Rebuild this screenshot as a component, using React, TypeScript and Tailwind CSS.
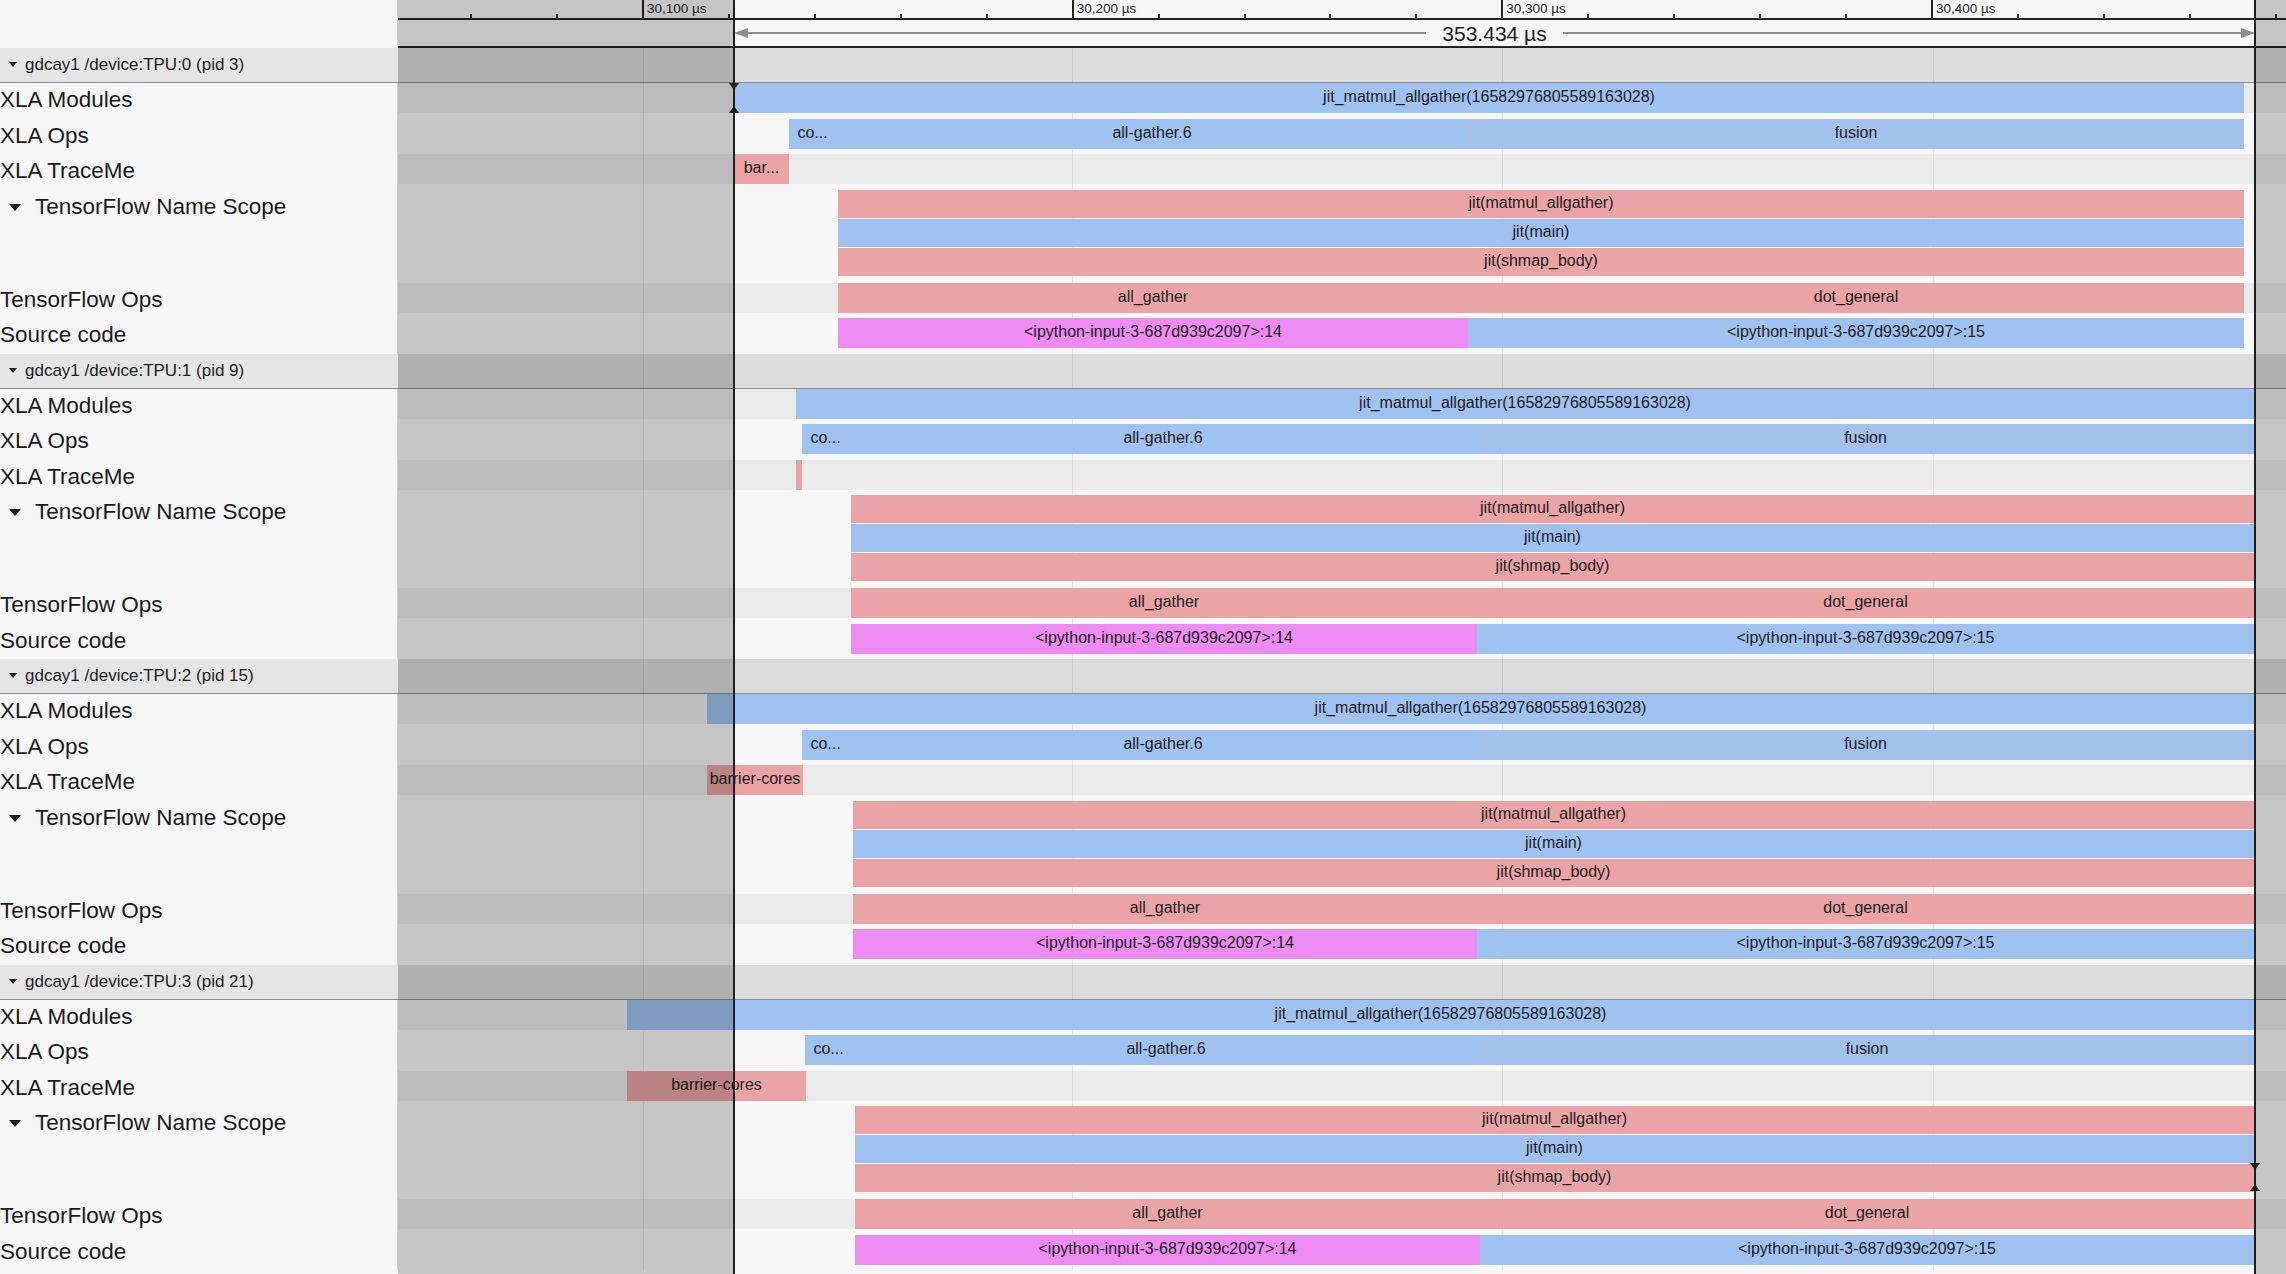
import React from "react";

// left edge of the timeline track, in page pixels
const X0 = 398;

type Bar = { s: number; e: number; label?: string; c: string };

type Section = {
  pid: string;
  mod: [number, number];
  co: number;
  ag: number;
  split: number;
  end: number;
  trace: { s: number; e: number; label: string };
  scope: number;
};

const BLUE = "bg-[#a0c2f0]";
const FUSION = "bg-[#a4c0ec]";
const PINK = "bg-[#eba4a6]";
const MAGENTA = "bg-[#ee8cf4]";

const sections: Section[] = [
  {
    pid: "gdcay1 /device:TPU:0 (pid 3)",
    mod: [734, 2244],
    co: 789,
    ag: 836,
    split: 1468,
    end: 2244,
    trace: { s: 734, e: 789, label: "bar..." },
    scope: 838,
  },
  {
    pid: "gdcay1 /device:TPU:1 (pid 9)",
    mod: [796, 2254],
    co: 802,
    ag: 849,
    split: 1477,
    end: 2254,
    trace: { s: 796, e: 802, label: "" },
    scope: 851,
  },
  {
    pid: "gdcay1 /device:TPU:2 (pid 15)",
    mod: [707, 2254],
    co: 802,
    ag: 849,
    split: 1477,
    end: 2254,
    trace: { s: 707, e: 803, label: "barrier-cores" },
    scope: 853,
  },
  {
    pid: "gdcay1 /device:TPU:3 (pid 21)",
    mod: [627, 2254],
    co: 805,
    ag: 852,
    split: 1480,
    end: 2254,
    trace: { s: 627, e: 806, label: "barrier-cores" },
    scope: 855,
  },
];

function BarEl({ b, top, h }: { b: Bar; top: number; h: number }) {
  return (
    <div
      className={`absolute z-[2] flex items-center justify-center overflow-hidden whitespace-nowrap pb-[2px] text-[16px] text-[#1c1c1c] ${b.c}`}
      style={{ left: b.s - X0, width: b.e - b.s, top, height: h }}
    >
      {b.label}
    </div>
  );
}

function Label({ children, scope }: { children: React.ReactNode; scope?: boolean }) {
  return (
    <div className="flex w-[398px] shrink-0 items-start border-r border-[#d2d2d2]">
      {scope ? (
        <div className="flex items-center">
          <svg width="12" height="8" viewBox="0 0 12 8" className="ml-[9px] mr-[14px] mt-[3px]">
            <polygon points="0,0 12,0 6,7" fill="#1c1c1c" />
          </svg>
          <span className="text-[22.5px] leading-[33px] text-[#1a1a1a]">{children}</span>
        </div>
      ) : (
        <span className="text-[22.5px] leading-[33px] text-[#1a1a1a]">{children}</span>
      )}
    </div>
  );
}

function Row({ label, bars, stripe }: { label: string; bars: Bar[]; stripe?: boolean }) {
  return (
    <div className="flex h-[35.5px]">
      <Label>{label}</Label>
      <div className="relative flex-1">
        {stripe && <div className="absolute inset-x-0 top-0 h-[30px] bg-[#ebebeb]" />}
        {bars.map((b, i) => (
          <BarEl key={i} b={b} top={0} h={30} />
        ))}
      </div>
    </div>
  );
}

function ScopeRow({ start, end }: { start: number; end: number }) {
  const levels: Bar[] = [
    { s: start, e: end, label: "jit(matmul_allgather)", c: PINK },
    { s: start, e: end, label: "jit(main)", c: BLUE },
    { s: start, e: end, label: "jit(shmap_body)", c: PINK },
  ];
  return (
    <div className="flex h-[93px]">
      <Label scope>TensorFlow Name Scope</Label>
      <div className="relative flex-1">
        {levels.map((b, i) => (
          <BarEl key={i} b={b} top={i * 29} h={28} />
        ))}
      </div>
    </div>
  );
}

function SectionBlock({ s }: { s: Section }) {
  return (
    <div>
      <div className="flex h-[35px] border-b border-[#8e8b97]">
        <div className="flex w-[398px] shrink-0 items-center bg-[#e5e5e5]">
          <svg width="8" height="6" viewBox="0 0 8 6" className="ml-[9px] mr-[8px]">
            <polygon points="0,0 8,0 4,5" fill="#1c1c1c" />
          </svg>
          <span className="text-[17px] text-[#1c1c1c]">{s.pid}</span>
        </div>
        <div className="flex-1 bg-[#dcdcdc]" />
      </div>
      <Row
        label="XLA Modules"
        stripe
        bars={[{ s: s.mod[0], e: s.mod[1], label: "jit_matmul_allgather(16582976805589163028)", c: BLUE }]}
      />
      <Row
        label="XLA Ops"
        bars={[
          { s: s.co, e: s.ag, label: "co...", c: BLUE },
          { s: s.ag, e: s.split, label: "all-gather.6", c: BLUE },
          { s: s.split, e: s.end, label: "fusion", c: FUSION },
        ]}
      />
      <Row label="XLA TraceMe" stripe bars={[{ s: s.trace.s, e: s.trace.e, label: s.trace.label, c: PINK }]} />
      <ScopeRow start={s.scope} end={s.end} />
      <Row
        label="TensorFlow Ops"
        stripe
        bars={[
          { s: s.scope, e: s.split, label: "all_gather", c: PINK },
          { s: s.split, e: s.end, label: "dot_general", c: PINK },
        ]}
      />
      <Row
        label="Source code"
        bars={[
          { s: s.scope, e: s.split, label: "<ipython-input-3-687d939c2097>:14", c: MAGENTA },
          { s: s.split, e: s.end, label: "<ipython-input-3-687d939c2097>:15", c: BLUE },
        ]}
      />
    </div>
  );
}

function Ruler() {
  const ticks: { x: number; major: boolean; t: number }[] = [];
  for (let t = 30040; t <= 30480; t += 20) {
    const x = 643 + (t - 30100) * 4.2965 - X0;
    if (x < 0) continue;
    ticks.push({ x, major: t % 100 === 0, t });
  }
  return (
    <div className="flex h-[48px]">
      <div className="w-[398px] shrink-0 border-r border-[#d2d2d2]" />
      <div className="relative flex-1">
        {ticks.map((tk) =>
          tk.major ? (
            <div key={tk.t} className="absolute top-0 h-[19px]" style={{ left: tk.x - 1 }}>
              <div className="absolute left-0 top-0 h-[19px] w-[2px] bg-[#222]" />
              <span className="absolute left-[5px] top-[1px] whitespace-nowrap text-[13.5px] leading-[15px] text-[#222]">
                {tk.t.toLocaleString("en-US")} µs
              </span>
            </div>
          ) : (
            <div key={tk.t} className="absolute top-[14px] h-[5px] w-[2px] bg-[#222]" style={{ left: tk.x - 1 }} />
          ),
        )}
        <div className="absolute inset-x-0 top-[18px] h-[2px] bg-[#222]" />
        <div className="absolute left-[336px] top-[20px] flex h-[26px] w-[1521px] items-center">
          <svg width="14" height="10" viewBox="0 0 14 10" className="shrink-0">
            <polygon points="0,5 14,0 14,10" fill="#8e8b96" />
          </svg>
          <div className="h-[2px] flex-1 bg-[#8e8b96]" />
          <span className="mx-[16px] text-[21px] leading-none text-[#1c1c1c]">353.434 µs</span>
          <div className="h-[2px] flex-1 bg-[#8e8b96]" />
          <svg width="14" height="10" viewBox="0 0 14 10" className="shrink-0">
            <polygon points="14,5 0,0 0,10" fill="#8e8b96" />
          </svg>
        </div>
        <div className="absolute inset-x-0 top-[46px] h-[2px] bg-[#222]" />
      </div>
    </div>
  );
}

export default function App() {
  const grid = [643, 1072, 1502, 1933];
  return (
    <div className="relative h-[1274px] w-[2286px] overflow-hidden bg-[#f7f7f7] font-['Liberation_Sans',Arial,sans-serif]">
      <Ruler />
      <div className="relative">
        {grid.map((x) => (
          <div key={x} className="absolute bottom-0 top-0 z-[1] w-px bg-black/[0.07]" style={{ left: x }} />
        ))}
        {sections.map((s) => (
          <SectionBlock key={s.pid} s={s} />
        ))}
      </div>

      {/* shaded area outside the selection */}
      <div className="absolute bottom-0 left-[398px] top-0 z-10 w-[335px] bg-black/20" />
      <div className="absolute bottom-0 left-[2256px] right-0 top-0 z-10 bg-black/20" />

      {/* selection boundaries */}
      <div className="absolute bottom-0 left-[733px] top-0 z-20 w-[2px] bg-[#1e1e1e]" />
      <div className="absolute bottom-0 left-[2254px] top-0 z-20 w-[2px] bg-[#1e1e1e]" />

      <svg width="10" height="7" viewBox="0 0 10 7" className="absolute left-[729px] top-[83px] z-20">
        <polygon points="0,0 10,0 5,7" fill="#1e1e1e" />
      </svg>
      <svg width="10" height="7" viewBox="0 0 10 7" className="absolute left-[729px] top-[106px] z-20">
        <polygon points="0,7 10,7 5,0" fill="#1e1e1e" />
      </svg>
      <svg width="10" height="7" viewBox="0 0 10 7" className="absolute left-[2250px] top-[1163px] z-20">
        <polygon points="0,0 10,0 5,7" fill="#1e1e1e" />
      </svg>
      <svg width="10" height="7" viewBox="0 0 10 7" className="absolute left-[2250px] top-[1184px] z-20">
        <polygon points="0,7 10,7 5,0" fill="#1e1e1e" />
      </svg>
    </div>
  );
}
